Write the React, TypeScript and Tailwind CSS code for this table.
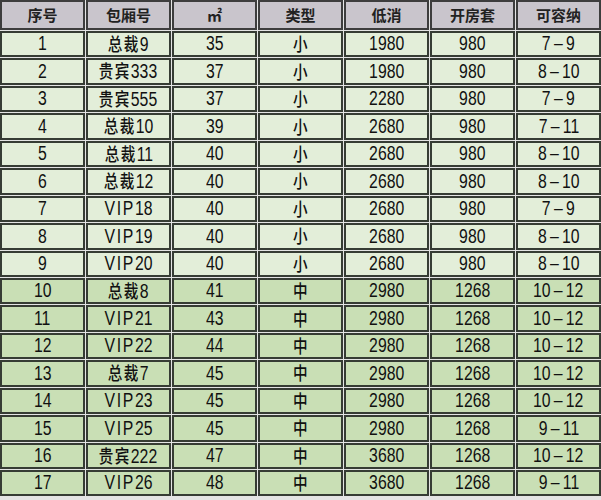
import { Fragment } from 'react';

type Row = [string, string, string, string, string, string, string];

const rows: Row[] = [
  ['1', '总裁9', '35', '小', '1980', '980', '7-9'],
  ['2', '贵宾333', '37', '小', '1980', '980', '8-10'],
  ['3', '贵宾555', '37', '小', '2280', '980', '7-9'],
  ['4', '总裁10', '39', '小', '2680', '980', '7-11'],
  ['5', '总裁11', '40', '小', '2680', '980', '8-10'],
  ['6', '总裁12', '40', '小', '2680', '980', '8-10'],
  ['7', 'VIP18', '40', '小', '2680', '980', '7-9'],
  ['8', 'VIP19', '40', '小', '2680', '980', '8-10'],
  ['9', 'VIP20', '40', '小', '2680', '980', '8-10'],
  ['10', '总裁8', '41', '中', '2980', '1268', '10-12'],
  ['11', 'VIP21', '43', '中', '2980', '1268', '10-12'],
  ['12', 'VIP22', '44', '中', '2980', '1268', '10-12'],
  ['13', '总裁7', '45', '中', '2980', '1268', '10-12'],
  ['14', 'VIP23', '45', '中', '2980', '1268', '10-12'],
  ['15', 'VIP25', '45', '中', '2980', '1268', '9-11'],
  ['16', '贵宾222', '47', '中', '3680', '1268', '10-12'],
  ['17', 'VIP26', '48', '中', '3680', '1268', '9-11'],
];

const headers = ['序号', '包厢号', '㎡', '类型', '低消', '开房套', '可容纳'];

// the cell text is a tall narrow face: draw it wide, then squeeze the whole run
function Label({ text }: { text: string }) {
  const parts = text.match(/[\u3000-\u9fff]+|[A-Za-z]+|[^\u3000-\u9fffA-Za-z]+/g) ?? [];
  return (
    <span className="inline-block whitespace-nowrap scale-x-[0.81] leading-none">
      {parts.map((p, i) => {
        if (/[\u3000-\u9fff]/.test(p)) {
          return (
            <span key={i} className="font-['Noto_Sans_CJK_SC',sans-serif] text-[18px] font-medium tracking-[1.75px]">
              {p}
            </span>
          );
        }
        if (/[A-Za-z]/.test(p)) {
          return (
            <span key={i} className="text-[19.5px] tracking-[2px]">
              {p}
            </span>
          );
        }
        return (
          <span key={i} className="text-[19.5px]">
            {p.split('-').map((seg, j) => (
              <Fragment key={j}>
                {j > 0 && <span className="mx-[4px]">–</span>}
                {seg}
              </Fragment>
            ))}
          </span>
        );
      })}
    </span>
  );
}

export default function App() {
  return (
    <div className="w-[601px] h-[500px] overflow-hidden bg-[#e4e4e4] font-['Liberation_Sans','Noto_Sans_CJK_SC',sans-serif] text-[#111]">
      <div className="grid grid-cols-7 grid-rows-[30px_repeat(17,26.45px)] gap-[1px]">
        {headers.map((h) => (
          <div
            key={h}
            className="flex items-center justify-center border-2 border-[#3d3d3d] bg-[#c9c5cc] font-['Noto_Sans_CJK_SC',sans-serif] text-[15px] font-bold text-[#222]"
          >
            {h}
          </div>
        ))}
        {rows.map((r, ri) =>
          r.map((c, ci) => (
            <div
              key={`${ri}-${ci}`}
              className={`flex items-center justify-center border-2 border-[#363c34] ${
                ri < 9 ? 'bg-[#e3eed9]' : 'bg-[#c9dfb5]'
              }`}
            >
              <Label text={c} />
            </div>
          ))
        )}
      </div>
    </div>
  );
}
